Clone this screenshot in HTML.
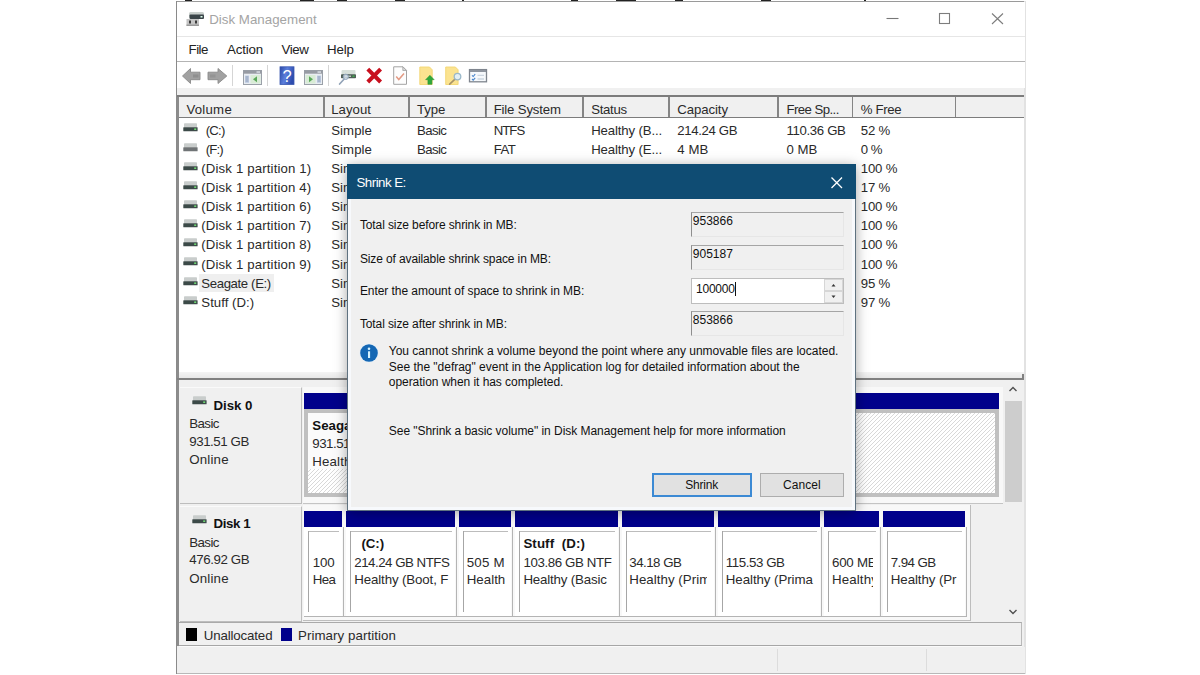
<!DOCTYPE html>
<html><head><meta charset="utf-8"><title>Disk Management</title>
<style>
html,body{margin:0;padding:0;background:#fff;}
body{width:1200px;height:675px;position:relative;overflow:hidden;font-family:"Liberation Sans",sans-serif;font-size:13.6px;color:#202020;}
.a{position:absolute;white-space:pre;}
.b{position:absolute;}
</style></head><body>
<div class="b" style="left:185px;top:0px;width:7px;height:1px;background:#222;"></div>
<div class="b" style="left:300px;top:0px;width:14px;height:1px;background:#222;"></div>
<div class="b" style="left:337px;top:0px;width:10px;height:1px;background:#222;"></div>
<div class="b" style="left:395px;top:0px;width:10px;height:1px;background:#222;"></div>
<div class="b" style="left:462px;top:0px;width:2px;height:1px;background:#222;"></div>
<div class="b" style="left:571px;top:0px;width:7px;height:1px;background:#222;"></div>
<div class="b" style="left:616px;top:0px;width:20px;height:1px;background:#222;"></div>
<div class="b" style="left:675px;top:0px;width:8px;height:1px;background:#222;"></div>
<div class="b" style="left:761px;top:0px;width:10px;height:1px;background:#222;"></div>
<div class="b" style="left:864px;top:0px;width:2px;height:1px;background:#222;"></div>
<div class="b" style="left:176px;top:1px;width:850px;height:673px;background:#f0f0f0;"></div>
<div class="b" style="left:176px;top:1px;width:850px;height:1px;background:#9a9a9a;"></div>
<div class="b" style="left:176px;top:1px;width:1px;height:673px;background:#8a8a8a;"></div>
<div class="b" style="left:1024px;top:1px;width:1.5px;height:673px;background:#e2e2e2;"></div>
<div class="b" style="left:177px;top:2px;width:848px;height:34px;background:#fff;"></div>
<div class="a" style="left:209.2px;top:10.9px;font-size:13.3px;line-height:17px;color:#a4a4a4;letter-spacing:0.022px;">Disk Management</div>
<svg class="b" style="left:185px;top:10px" width="22" height="18" viewBox="0 0 22 18"><rect x="4" y="2" width="15" height="6" rx="1.5" fill="#c9cfcc"/><rect x="4.5" y="4.5" width="14.5" height="4.5" rx="1" fill="#3a4448"/><rect x="15.5" y="6" width="2" height="1.5" fill="#dfe"/><rect x="1.5" y="9" width="12.5" height="7" fill="#c4c4c4"/><rect x="1.5" y="14.500" width="12.5" height="1.5" fill="#9a9a9a"/><rect x="4" y="10.500" width="2" height="3" fill="#3a3a3a"/><rect x="10" y="10.500" width="2" height="3" fill="#3a3a3a"/></svg>
<svg class="b" style="left:880px;top:8px" width="130" height="22" viewBox="0 0 130 22"><path d="M6.5 10.500h12" stroke="#777" stroke-width="1.1" fill="none"/><rect x="59.500" y="5.500" width="10" height="10" stroke="#7d7d7d" stroke-width="1.1" fill="none"/><path d="M112 5.500l11 10.500M123 5.500l-11 10.500" stroke="#7d7d7d" stroke-width="1.1" fill="none"/></svg>
<div class="b" style="left:177px;top:36px;width:848px;height:1px;background:#e6e6e6;"></div>
<div class="b" style="left:177px;top:37px;width:848px;height:24px;background:#fff;"></div>
<div class="b" style="left:177px;top:61px;width:848px;height:1px;background:#b4b4b4;"></div>
<div class="a" style="left:188.5px;top:41.1px;font-size:13.3px;line-height:17px;color:#222;letter-spacing:-0.484px;">File</div>
<div class="a" style="left:227px;top:41.1px;font-size:13.3px;line-height:17px;color:#222;letter-spacing:-0.161px;">Action</div>
<div class="a" style="left:281.5px;top:41.1px;font-size:13.3px;line-height:17px;color:#222;letter-spacing:-0.398px;">View</div>
<div class="a" style="left:327px;top:41.1px;font-size:13.3px;line-height:17px;color:#222;letter-spacing:-0.14px;">Help</div>
<div class="b" style="left:177px;top:62px;width:848px;height:25.5px;background:#fff;"></div>
<svg class="b" style="left:177px;top:62px" width="320" height="26" viewBox="177 62 320 26">
<path d="M182.500 76L190.500 68.500v3.700h9.500v7.500h-9.500v3.800z" fill="#a1a1a1" stroke="#8a8a8a" stroke-width="0.9" stroke-linejoin="round"/>
<rect x="193" y="74.500" width="5.500" height="3" fill="#878787" opacity="0.7"/>
<path d="M226.800 76L218 68.500v3.700h-10v7.500h10v3.800z" fill="#a1a1a1" stroke="#8a8a8a" stroke-width="0.9" stroke-linejoin="round"/><rect x="210" y="74.500" width="5.500" height="3" fill="#878787" opacity="0.5"/>
<path d="M232.5 65v21" stroke="#d5d5d5" stroke-width="1"/>
<path d="M267.5 65v21" stroke="#d5d5d5" stroke-width="1"/>
<path d="M328.5 65v21" stroke="#d5d5d5" stroke-width="1"/>
<rect x="243.5" y="70.5" width="18" height="14" fill="#e9edf2" stroke="#9aa0a8" stroke-width="1"/>
<rect x="243.5" y="70.500" width="18" height="3.200" fill="#979ba3"/>
<rect x="256.5" y="71.3" width="3.5" height="1.5" fill="#d8dde3"/>
<rect x="245.0" y="75.5" width="4" height="7.5" fill="#c6d3e6"/>
<rect x="250.5" y="75" width="10" height="8.5" fill="#d9ecd6"/>
<path d="M257.0 76.2v6l-4-3z" fill="#5aa85a"/>
<path d="M245.5 77h3M245.5 79h3M245.5 81h3" stroke="#7c8aa6" stroke-width="0.8"/>
<defs><linearGradient id="hg" x1="0" y1="0" x2="1" y2="0.35"><stop offset="0" stop-color="#2b49a6"/><stop offset="0.5" stop-color="#5b7edb"/><stop offset="1" stop-color="#2d4cae"/></linearGradient></defs>
<rect x="280" y="66.800" width="14" height="17.700" fill="url(#hg)" stroke="#3a57b0" stroke-width="0.8"/>
<text x="287" y="81.600" font-family="Liberation Sans, sans-serif" font-size="16.500" fill="#ffffff" text-anchor="middle">?</text>
<rect x="304.5" y="70.5" width="18" height="14" fill="#e9edf2" stroke="#9aa0a8" stroke-width="1"/>
<rect x="304.5" y="70.500" width="18" height="3.200" fill="#979ba3"/>
<rect x="317.5" y="71.3" width="3.5" height="1.5" fill="#d8dde3"/>
<rect x="317.0" y="75.5" width="4" height="7.5" fill="#c6d3e6"/>
<rect x="305.5" y="75" width="10" height="8.500" fill="#d9ecd6"/>
<path d="M309.0 76.2v6l4-3z" fill="#5aa85a"/>
<path d="M317.5 77h3M317.5 79h3M317.5 81h3" stroke="#7c8aa6" stroke-width="0.8"/>
<rect x="341.500" y="70" width="14" height="5" rx="1" fill="#d6dfd9"/>
<rect x="341" y="74.300" width="15" height="3.900" rx="0.800" fill="#4f5f57"/>
<rect x="345" y="75.600" width="6" height="1.300" fill="#c9d6cf"/><rect x="352.500" y="75.500" width="2" height="1.500" fill="#3fae4a"/>
<path d="M339.600 84l4.600-5" stroke="#93a4b8" stroke-width="1.700" stroke-linecap="round"/>
<circle cx="345.800" cy="76.800" r="2.600" fill="#d4dfea" fill-opacity="0.85" stroke="#8fa3ba" stroke-width="1"/>
<path d="M367.800 69.200l12.800 12.800M380.600 69.200l-12.800 12.800" stroke="#c8101e" stroke-width="4" stroke-linecap="butt"/>
<path d="M393.700 66.800h9.300l3.500 3.500v14h-12.800z" fill="#fdfdfd" stroke="#a3a3a3" stroke-width="1"/>
<path d="M402.800 66.800v3.700h3.700z" fill="#d9d9d9" stroke="#a3a3a3" stroke-width="0.800"/>
<path d="M396.200 76.500l2.600 3 5.200-6" fill="none" stroke="#e39a84" stroke-width="1.500"/>
<path d="M419.800 67h9.700l2.700 2.800v14.700h-12.400z" fill="#fbe390" stroke="#f3d673" stroke-width="0.900"/>
<path d="M429.900 75.300l4.300 4.400h-2.300v4.600h-4v-4.600h-2.300z" fill="#2fa83b" stroke="#23912f" stroke-width="0.500"/>
<path d="M445.700 67h9.700l2.700 2.800v14.700h-12.400z" fill="#fbe390" stroke="#f3d673" stroke-width="0.900"/>
<path d="M455 79.200l-5.300 4.900" stroke="#a89468" stroke-width="1.700" stroke-linecap="round"/>
<circle cx="457.500" cy="76.600" r="3.300" fill="#e3eff5" stroke="#9ab8c9" stroke-width="1.300"/>
<rect x="469.500" y="69.600" width="17" height="12.200" fill="#f6f9fc" stroke="#7f858e" stroke-width="1.300"/>
<rect x="470" y="70" width="16" height="2" fill="#8e959f"/>
<path d="M472 75.300l1.200 1.200 2-2.400M472 79l1.200 1.200 2-2.400" stroke="#4a86cc" stroke-width="1.100" fill="none"/>
<path d="M477.500 75.300h6.500M477.500 79h6.500" stroke="#ccd6e0" stroke-width="1.300"/>
</svg>
<div class="b" style="left:177px;top:95.3px;width:847px;height:1.6px;background:#7c7c7c;"></div>
<div class="b" style="left:177px;top:96.9px;width:2px;height:282px;background:#8c8c8c;"></div>
<div class="b" style="left:179px;top:96.9px;width:845px;height:19.7px;background:#f0f0f0;"></div>
<div class="b" style="left:179px;top:116.6px;width:845px;height:1.6px;background:#7c7c7c;"></div>
<div class="b" style="left:179px;top:118.2px;width:845px;height:253.5px;background:#fff;"></div>
<div class="b" style="left:179px;top:371.5px;width:845px;height:6.7px;background:linear-gradient(#f4f4f4,#e8e8e8);"></div>
<div class="b" style="left:177px;top:378.2px;width:846.5px;height:1.6px;background:#808080;"></div>
<div class="b" style="left:1022px;top:374px;width:1.5px;height:5px;background:#808080;"></div>
<div class="b" style="left:323px;top:97px;width:1.8px;height:20px;background:#858585;"></div>
<div class="b" style="left:408.3px;top:97px;width:1.8px;height:20px;background:#858585;"></div>
<div class="b" style="left:485px;top:97px;width:1.8px;height:20px;background:#858585;"></div>
<div class="b" style="left:582.3px;top:97px;width:1.8px;height:20px;background:#858585;"></div>
<div class="b" style="left:668px;top:97px;width:1.8px;height:20px;background:#858585;"></div>
<div class="b" style="left:777px;top:97px;width:1.8px;height:20px;background:#858585;"></div>
<div class="b" style="left:851.7px;top:97px;width:1.8px;height:20px;background:#858585;"></div>
<div class="b" style="left:954.5px;top:97px;width:1.8px;height:20px;background:#858585;"></div>
<div class="a" style="left:186.4px;top:101.1px;font-size:13.2px;line-height:17px;color:#2a2a2a;letter-spacing:0.267px;">Volume</div>
<div class="a" style="left:331.2px;top:101.1px;font-size:13.2px;line-height:17px;color:#2a2a2a;letter-spacing:0.032px;">Layout</div>
<div class="a" style="left:417px;top:101.1px;font-size:13.2px;line-height:17px;color:#2a2a2a;letter-spacing:-0.073px;">Type</div>
<div class="a" style="left:493.7px;top:101.1px;font-size:13.2px;line-height:17px;color:#2a2a2a;letter-spacing:-0.163px;">File System</div>
<div class="a" style="left:591.2px;top:101.1px;font-size:13.2px;line-height:17px;color:#2a2a2a;letter-spacing:-0.298px;">Status</div>
<div class="a" style="left:677.2px;top:101.1px;font-size:13.2px;line-height:17px;color:#2a2a2a;letter-spacing:-0.064px;">Capacity</div>
<div class="a" style="left:786.4px;top:101.1px;font-size:13.2px;line-height:17px;color:#2a2a2a;letter-spacing:-0.551px;">Free Sp...</div>
<div class="a" style="left:860.8px;top:101.1px;font-size:13.2px;line-height:17px;color:#2a2a2a;letter-spacing:-0.353px;">% Free</div>
<svg class="b" style="left:183px;top:123.3px" width="16" height="10" viewBox="0 0 16 10"><rect x="1" y="0.300" width="13" height="4.200" rx="0.800" fill="#c9cdcc"/><rect x="0.300" y="4.200" width="14.300" height="4" rx="0.500" fill="#3c4a48"/><rect x="11.200" y="5.400" width="2" height="1.600" fill="#6fd872"/></svg>
<div class="a" style="left:205.8px;top:121.5px;font-size:13.2px;line-height:17px;color:#2a2a2a;letter-spacing:-0.821px;">(C:)</div>
<div class="a" style="left:331.2px;top:121.5px;font-size:13.2px;line-height:17px;color:#2a2a2a;letter-spacing:0.081px;">Simple</div>
<div class="a" style="left:417px;top:121.5px;font-size:13.2px;line-height:17px;color:#2a2a2a;letter-spacing:-0.59px;">Basic</div>
<div class="a" style="left:493.7px;top:121.5px;font-size:13.2px;line-height:17px;color:#2a2a2a;letter-spacing:-0.959px;">NTFS</div>
<div class="a" style="left:591.2px;top:121.5px;font-size:13.2px;line-height:17px;color:#2a2a2a;letter-spacing:-0.136px;">Healthy (B...</div>
<div class="a" style="left:677.2px;top:121.5px;font-size:13.2px;line-height:17px;color:#2a2a2a;letter-spacing:-0.34px;">214.24 GB</div>
<div class="a" style="left:786.4px;top:121.5px;font-size:13.2px;line-height:17px;color:#2a2a2a;letter-spacing:-0.32px;">110.36 GB</div>
<div class="a" style="left:860.8px;top:121.5px;font-size:13.2px;line-height:17px;color:#2a2a2a;letter-spacing:-0.216px;">52 %</div>
<svg class="b" style="left:183px;top:142.5px" width="16" height="10" viewBox="0 0 16 10"><rect x="1" y="0.300" width="13" height="4.200" rx="0.800" fill="#c9cdcc"/><rect x="0.300" y="4.200" width="14.300" height="4" rx="0.500" fill="#707476"/></svg>
<div class="a" style="left:205.8px;top:140.65px;font-size:13.2px;line-height:17px;color:#2a2a2a;letter-spacing:-0.879px;">(F:)</div>
<div class="a" style="left:331.2px;top:140.65px;font-size:13.2px;line-height:17px;color:#2a2a2a;letter-spacing:0.081px;">Simple</div>
<div class="a" style="left:417px;top:140.65px;font-size:13.2px;line-height:17px;color:#2a2a2a;letter-spacing:-0.59px;">Basic</div>
<div class="a" style="left:493.7px;top:140.65px;font-size:13.2px;line-height:17px;color:#2a2a2a;letter-spacing:-0.601px;">FAT</div>
<div class="a" style="left:591.2px;top:140.65px;font-size:13.2px;line-height:17px;color:#2a2a2a;letter-spacing:-0.136px;">Healthy (E...</div>
<div class="a" style="left:677.2px;top:140.65px;font-size:13.2px;line-height:17px;color:#2a2a2a;letter-spacing:0.105px;">4 MB</div>
<div class="a" style="left:786.4px;top:140.65px;font-size:13.2px;line-height:17px;color:#2a2a2a;letter-spacing:0.005px;">0 MB</div>
<div class="a" style="left:860.8px;top:140.65px;font-size:13.2px;line-height:17px;color:#2a2a2a;letter-spacing:-0.511px;">0 %</div>
<svg class="b" style="left:183px;top:161.6px" width="16" height="10" viewBox="0 0 16 10"><rect x="1" y="0.300" width="13" height="4.200" rx="0.800" fill="#c9cdcc"/><rect x="0.300" y="4.200" width="14.300" height="4" rx="0.500" fill="#3c4a48"/><rect x="11.200" y="5.400" width="2" height="1.600" fill="#6fd872"/></svg>
<div class="a" style="left:201.3px;top:159.8px;font-size:13.2px;line-height:17px;color:#2a2a2a;letter-spacing:0.154px;">(Disk 1 partition 1)</div>
<div class="a" style="left:331.2px;top:159.8px;font-size:13.2px;line-height:17px;color:#2a2a2a;letter-spacing:0.081px;">Simple</div>
<div class="a" style="left:417px;top:159.8px;font-size:13.2px;line-height:17px;color:#2a2a2a;letter-spacing:-0.59px;">Basic</div>
<div class="a" style="left:591.2px;top:159.8px;font-size:13.2px;line-height:17px;color:#2a2a2a;letter-spacing:-0.136px;">Healthy (E...</div>
<div class="a" style="left:677.2px;top:159.8px;font-size:13.2px;line-height:17px;color:#2a2a2a;letter-spacing:-0.159px;">100 MB</div>
<div class="a" style="left:786.4px;top:159.8px;font-size:13.2px;line-height:17px;color:#2a2a2a;letter-spacing:-0.159px;">100 MB</div>
<div class="a" style="left:860.8px;top:159.8px;font-size:13.2px;line-height:17px;color:#2a2a2a;letter-spacing:-0.201px;">100 %</div>
<svg class="b" style="left:183px;top:180.8px" width="16" height="10" viewBox="0 0 16 10"><rect x="1" y="0.300" width="13" height="4.200" rx="0.800" fill="#c9cdcc"/><rect x="0.300" y="4.200" width="14.300" height="4" rx="0.500" fill="#3c4a48"/><rect x="11.200" y="5.400" width="2" height="1.600" fill="#6fd872"/></svg>
<div class="a" style="left:201.3px;top:178.95px;font-size:13.2px;line-height:17px;color:#2a2a2a;letter-spacing:0.154px;">(Disk 1 partition 4)</div>
<div class="a" style="left:331.2px;top:178.95px;font-size:13.2px;line-height:17px;color:#2a2a2a;letter-spacing:0.081px;">Simple</div>
<div class="a" style="left:417px;top:178.95px;font-size:13.2px;line-height:17px;color:#2a2a2a;letter-spacing:-0.59px;">Basic</div>
<div class="a" style="left:591.2px;top:178.95px;font-size:13.2px;line-height:17px;color:#2a2a2a;letter-spacing:-0.192px;">Healthy (R...</div>
<div class="a" style="left:677.2px;top:178.95px;font-size:13.2px;line-height:17px;color:#2a2a2a;letter-spacing:-0.159px;">505 MB</div>
<div class="a" style="left:786.4px;top:178.95px;font-size:13.2px;line-height:17px;color:#2a2a2a;letter-spacing:-0.125px;">86 MB</div>
<div class="a" style="left:860.8px;top:178.95px;font-size:13.2px;line-height:17px;color:#2a2a2a;letter-spacing:-0.216px;">17 %</div>
<svg class="b" style="left:183px;top:199.9px" width="16" height="10" viewBox="0 0 16 10"><rect x="1" y="0.300" width="13" height="4.200" rx="0.800" fill="#c9cdcc"/><rect x="0.300" y="4.200" width="14.300" height="4" rx="0.500" fill="#3c4a48"/><rect x="11.200" y="5.400" width="2" height="1.600" fill="#6fd872"/></svg>
<div class="a" style="left:201.3px;top:198.1px;font-size:13.2px;line-height:17px;color:#2a2a2a;letter-spacing:0.154px;">(Disk 1 partition 6)</div>
<div class="a" style="left:331.2px;top:198.1px;font-size:13.2px;line-height:17px;color:#2a2a2a;letter-spacing:0.081px;">Simple</div>
<div class="a" style="left:417px;top:198.1px;font-size:13.2px;line-height:17px;color:#2a2a2a;letter-spacing:-0.59px;">Basic</div>
<div class="a" style="left:591.2px;top:198.1px;font-size:13.2px;line-height:17px;color:#2a2a2a;letter-spacing:-0.005px;">Healthy (P...</div>
<div class="a" style="left:677.2px;top:198.1px;font-size:13.2px;line-height:17px;color:#2a2a2a;letter-spacing:-0.402px;">34.18 GB</div>
<div class="a" style="left:786.4px;top:198.1px;font-size:13.2px;line-height:17px;color:#2a2a2a;letter-spacing:-0.402px;">34.18 GB</div>
<div class="a" style="left:860.8px;top:198.1px;font-size:13.2px;line-height:17px;color:#2a2a2a;letter-spacing:-0.201px;">100 %</div>
<svg class="b" style="left:183px;top:219.1px" width="16" height="10" viewBox="0 0 16 10"><rect x="1" y="0.300" width="13" height="4.200" rx="0.800" fill="#c9cdcc"/><rect x="0.300" y="4.200" width="14.300" height="4" rx="0.500" fill="#3c4a48"/><rect x="11.200" y="5.400" width="2" height="1.600" fill="#6fd872"/></svg>
<div class="a" style="left:201.3px;top:217.25px;font-size:13.2px;line-height:17px;color:#2a2a2a;letter-spacing:0.154px;">(Disk 1 partition 7)</div>
<div class="a" style="left:331.2px;top:217.25px;font-size:13.2px;line-height:17px;color:#2a2a2a;letter-spacing:0.081px;">Simple</div>
<div class="a" style="left:417px;top:217.25px;font-size:13.2px;line-height:17px;color:#2a2a2a;letter-spacing:-0.59px;">Basic</div>
<div class="a" style="left:591.2px;top:217.25px;font-size:13.2px;line-height:17px;color:#2a2a2a;letter-spacing:-0.005px;">Healthy (P...</div>
<div class="a" style="left:677.2px;top:217.25px;font-size:13.2px;line-height:17px;color:#2a2a2a;letter-spacing:-0.275px;">115.53 GB</div>
<div class="a" style="left:786.4px;top:217.25px;font-size:13.2px;line-height:17px;color:#2a2a2a;letter-spacing:-0.275px;">115.53 GB</div>
<div class="a" style="left:860.8px;top:217.25px;font-size:13.2px;line-height:17px;color:#2a2a2a;letter-spacing:-0.201px;">100 %</div>
<svg class="b" style="left:183px;top:238.2px" width="16" height="10" viewBox="0 0 16 10"><rect x="1" y="0.300" width="13" height="4.200" rx="0.800" fill="#c9cdcc"/><rect x="0.300" y="4.200" width="14.300" height="4" rx="0.500" fill="#3c4a48"/><rect x="11.200" y="5.400" width="2" height="1.600" fill="#6fd872"/></svg>
<div class="a" style="left:201.3px;top:236.4px;font-size:13.2px;line-height:17px;color:#2a2a2a;letter-spacing:0.154px;">(Disk 1 partition 8)</div>
<div class="a" style="left:331.2px;top:236.4px;font-size:13.2px;line-height:17px;color:#2a2a2a;letter-spacing:0.081px;">Simple</div>
<div class="a" style="left:417px;top:236.4px;font-size:13.2px;line-height:17px;color:#2a2a2a;letter-spacing:-0.59px;">Basic</div>
<div class="a" style="left:591.2px;top:236.4px;font-size:13.2px;line-height:17px;color:#2a2a2a;letter-spacing:-0.136px;">Healthy (E...</div>
<div class="a" style="left:677.2px;top:236.4px;font-size:13.2px;line-height:17px;color:#2a2a2a;letter-spacing:-0.159px;">600 MB</div>
<div class="a" style="left:786.4px;top:236.4px;font-size:13.2px;line-height:17px;color:#2a2a2a;letter-spacing:-0.159px;">600 MB</div>
<div class="a" style="left:860.8px;top:236.4px;font-size:13.2px;line-height:17px;color:#2a2a2a;letter-spacing:-0.201px;">100 %</div>
<svg class="b" style="left:183px;top:257.3px" width="16" height="10" viewBox="0 0 16 10"><rect x="1" y="0.300" width="13" height="4.200" rx="0.800" fill="#c9cdcc"/><rect x="0.300" y="4.200" width="14.300" height="4" rx="0.500" fill="#3c4a48"/><rect x="11.200" y="5.400" width="2" height="1.600" fill="#6fd872"/></svg>
<div class="a" style="left:201.3px;top:255.55px;font-size:13.2px;line-height:17px;color:#2a2a2a;letter-spacing:0.154px;">(Disk 1 partition 9)</div>
<div class="a" style="left:331.2px;top:255.55px;font-size:13.2px;line-height:17px;color:#2a2a2a;letter-spacing:0.081px;">Simple</div>
<div class="a" style="left:417px;top:255.55px;font-size:13.2px;line-height:17px;color:#2a2a2a;letter-spacing:-0.59px;">Basic</div>
<div class="a" style="left:591.2px;top:255.55px;font-size:13.2px;line-height:17px;color:#2a2a2a;letter-spacing:-0.005px;">Healthy (P...</div>
<div class="a" style="left:677.2px;top:255.55px;font-size:13.2px;line-height:17px;color:#2a2a2a;letter-spacing:-0.484px;">7.94 GB</div>
<div class="a" style="left:786.4px;top:255.55px;font-size:13.2px;line-height:17px;color:#2a2a2a;letter-spacing:-0.484px;">7.94 GB</div>
<div class="a" style="left:860.8px;top:255.55px;font-size:13.2px;line-height:17px;color:#2a2a2a;letter-spacing:-0.201px;">100 %</div>
<div class="b" style="left:199px;top:273.6px;width:74.5px;height:18.3px;background:#efefef;"></div>
<svg class="b" style="left:183px;top:276.5px" width="16" height="10" viewBox="0 0 16 10"><rect x="1" y="0.300" width="13" height="4.200" rx="0.800" fill="#c9cdcc"/><rect x="0.300" y="4.200" width="14.300" height="4" rx="0.500" fill="#3c4a48"/><rect x="11.200" y="5.400" width="2" height="1.600" fill="#6fd872"/></svg>
<div class="a" style="left:201.3px;top:274.7px;font-size:13.2px;line-height:17px;color:#2a2a2a;letter-spacing:-0.371px;">Seagate (E:)</div>
<div class="a" style="left:331.2px;top:274.7px;font-size:13.2px;line-height:17px;color:#2a2a2a;letter-spacing:0.081px;">Simple</div>
<div class="a" style="left:417px;top:274.7px;font-size:13.2px;line-height:17px;color:#2a2a2a;letter-spacing:-0.59px;">Basic</div>
<div class="a" style="left:493.7px;top:274.7px;font-size:13.2px;line-height:17px;color:#2a2a2a;letter-spacing:-0.959px;">NTFS</div>
<div class="a" style="left:591.2px;top:274.7px;font-size:13.2px;line-height:17px;color:#2a2a2a;letter-spacing:-0.136px;">Healthy (B...</div>
<div class="a" style="left:677.2px;top:274.7px;font-size:13.2px;line-height:17px;color:#2a2a2a;letter-spacing:-0.385px;">931.51 GB</div>
<div class="a" style="left:786.4px;top:274.7px;font-size:13.2px;line-height:17px;color:#2a2a2a;letter-spacing:-0.385px;">885.66 GB</div>
<div class="a" style="left:860.8px;top:274.7px;font-size:13.2px;line-height:17px;color:#2a2a2a;letter-spacing:-0.216px;">95 %</div>
<svg class="b" style="left:183px;top:295.7px" width="16" height="10" viewBox="0 0 16 10"><rect x="1" y="0.300" width="13" height="4.200" rx="0.800" fill="#c9cdcc"/><rect x="0.300" y="4.200" width="14.300" height="4" rx="0.500" fill="#3c4a48"/><rect x="11.200" y="5.400" width="2" height="1.600" fill="#6fd872"/></svg>
<div class="a" style="left:201.3px;top:293.85px;font-size:13.2px;line-height:17px;color:#2a2a2a;letter-spacing:0.037px;">Stuff (D:)</div>
<div class="a" style="left:331.2px;top:293.85px;font-size:13.2px;line-height:17px;color:#2a2a2a;letter-spacing:0.081px;">Simple</div>
<div class="a" style="left:417px;top:293.85px;font-size:13.2px;line-height:17px;color:#2a2a2a;letter-spacing:-0.59px;">Basic</div>
<div class="a" style="left:493.7px;top:293.85px;font-size:13.2px;line-height:17px;color:#2a2a2a;letter-spacing:-0.959px;">NTFS</div>
<div class="a" style="left:591.2px;top:293.85px;font-size:13.2px;line-height:17px;color:#2a2a2a;letter-spacing:-0.136px;">Healthy (B...</div>
<div class="a" style="left:677.2px;top:293.85px;font-size:13.2px;line-height:17px;color:#2a2a2a;letter-spacing:-0.385px;">103.86 GB</div>
<div class="a" style="left:786.4px;top:293.85px;font-size:13.2px;line-height:17px;color:#2a2a2a;letter-spacing:-0.385px;">100.97 GB</div>
<div class="a" style="left:860.8px;top:293.85px;font-size:13.2px;line-height:17px;color:#2a2a2a;letter-spacing:-0.216px;">97 %</div>
<div class="b" style="left:1004px;top:383px;width:18px;height:238px;background:#f0f0f0;"></div>
<div class="b" style="left:1005px;top:401px;width:17px;height:101px;background:#cdcdcd;"></div>
<svg class="b" style="left:1007px;top:385px" width="12" height="8" viewBox="0 0 12 8"><path d="M2.500 6L6 2.500L9.500 6" stroke="#505050" stroke-width="1.4" fill="none"/></svg>
<svg class="b" style="left:1007px;top:608px" width="12" height="8" viewBox="0 0 12 8"><path d="M2.500 2L6 5.500L9.500 2" stroke="#505050" stroke-width="1.4" fill="none"/></svg>
<div class="b" style="left:180px;top:387px;width:122px;height:117px;background:#f0f0f0;border-top:1px solid #fafafa;border-right:1px solid #bdbdbd;border-bottom:1px solid #bdbdbd;box-sizing:border-box;"></div>
<svg class="b" style="left:191.7px;top:396.2px" width="16" height="10" viewBox="0 0 16 10"><rect x="1" y="0.300" width="13" height="4.200" rx="0.800" fill="#c9cdcc"/><rect x="0.300" y="4.200" width="14.300" height="4" rx="0.500" fill="#3c4a48"/><rect x="11.200" y="5.400" width="2" height="1.600" fill="#6fd872"/></svg>
<div class="a" style="left:213.5px;top:396.5px;font-size:13.3px;line-height:17px;color:#111;font-weight:bold;letter-spacing:-0.065px;">Disk 0</div>
<div class="a" style="left:189.3px;top:414.7px;font-size:13.3px;line-height:17px;color:#2a2a2a;letter-spacing:-0.603px;">Basic</div>
<div class="a" style="left:189.3px;top:432.7px;font-size:13.3px;line-height:17px;color:#2a2a2a;letter-spacing:-0.453px;">931.51 GB</div>
<div class="a" style="left:189.3px;top:450.8px;font-size:13.3px;line-height:17px;color:#2a2a2a;letter-spacing:0.16px;">Online</div>
<div class="b" style="left:303px;top:387px;width:700px;height:117px;background:#f8f8f8;border-bottom:1px solid #c4c4c4;box-sizing:border-box;"></div>
<div class="b" style="left:304px;top:393px;width:695px;height:16px;background:#00008b;"></div>
<div class="b" style="left:304px;top:409px;width:695px;height:88px;background:#c0c0c0;"></div>
<div class="b" style="left:308px;top:413px;width:687px;height:80px;background:repeating-linear-gradient(135deg,#ffffff 0px,#ffffff 1.730px,#d8d8d8 1.930px,#d8d8d8 2.630px,#ffffff 2.828px);"></div>
<div class="b" style="left:308px;top:413px;width:60px;height:56px;background:#fbfbfb;"></div>
<div class="a" style="left:312.3px;top:417.0px;font-size:13.3px;line-height:17px;color:#111;font-weight:bold;letter-spacing:0.0px;">Seagate</div>
<div class="a" style="left:312.3px;top:434.8px;font-size:13.3px;line-height:17px;color:#2a2a2a;letter-spacing:-0.5px;">931.51 GB NTFS</div>
<div class="a" style="left:312.3px;top:452.7px;font-size:13.3px;line-height:17px;color:#2a2a2a;letter-spacing:0.129px;">Healthy</div>
<div class="b" style="left:180px;top:505.5px;width:122px;height:116px;background:#f0f0f0;border-top:1px solid #fafafa;border-right:1px solid #bdbdbd;border-bottom:1px solid #bdbdbd;box-sizing:border-box;"></div>
<svg class="b" style="left:191.7px;top:514.9px" width="16" height="10" viewBox="0 0 16 10"><rect x="1" y="0.300" width="13" height="4.200" rx="0.800" fill="#c9cdcc"/><rect x="0.300" y="4.200" width="14.300" height="4" rx="0.500" fill="#3c4a48"/><rect x="11.200" y="5.400" width="2" height="1.600" fill="#6fd872"/></svg>
<div class="a" style="left:213.5px;top:515.2px;font-size:13.3px;line-height:17px;color:#111;font-weight:bold;letter-spacing:-0.398px;">Disk 1</div>
<div class="a" style="left:189.3px;top:533.5px;font-size:13.3px;line-height:17px;color:#2a2a2a;letter-spacing:-0.603px;">Basic</div>
<div class="a" style="left:189.3px;top:551.3px;font-size:13.3px;line-height:17px;color:#2a2a2a;letter-spacing:-0.42px;">476.92 GB</div>
<div class="a" style="left:189.3px;top:569.5px;font-size:13.3px;line-height:17px;color:#2a2a2a;letter-spacing:0.16px;">Online</div>
<div class="b" style="left:303px;top:505px;width:668px;height:116px;background:#f8f8f8;border-right:1px solid #bdbdbd;border-bottom:1px solid #bdbdbd;box-sizing:border-box;"></div>
<div class="b" style="left:304px;top:511px;width:38px;height:16px;background:#00008b;"></div>
<div class="b" style="left:304px;top:527px;width:38px;height:89px;background:#fff;"></div>
<div class="b" style="left:342.5px;top:527px;width:1.5px;height:89px;background:#b4b4b4;"></div>
<div class="b" style="left:308px;top:530.5px;width:31px;height:1.5px;background:#bcbcbc;"></div>
<div class="b" style="left:308px;top:530.5px;width:1.3px;height:81.5px;background:#a6a6a6;"></div>
<div class="a" style="left:312.8px;top:553.7px;font-size:13.3px;line-height:17px;color:#2a2a2a;letter-spacing:-0.229px;">100</div>
<div class="a" style="left:312.8px;top:571.3px;font-size:13.3px;line-height:17px;color:#2a2a2a;letter-spacing:-0.635px;">Hea</div>
<div class="b" style="left:346px;top:511px;width:109px;height:16px;background:#00008b;"></div>
<div class="b" style="left:346px;top:527px;width:109px;height:89px;background:#fff;"></div>
<div class="b" style="left:455.5px;top:527px;width:1.5px;height:89px;background:#b4b4b4;"></div>
<div class="b" style="left:350px;top:530.5px;width:102px;height:1.5px;background:#bcbcbc;"></div>
<div class="b" style="left:350px;top:530.5px;width:1.3px;height:81.5px;background:#a6a6a6;"></div>
<div class="a" style="left:354.3px;top:535.1px;font-size:13.3px;line-height:17px;color:#151515;font-weight:bold;letter-spacing:-0.097px;">&nbsp;&nbsp;(C:)</div>
<div class="a" style="left:354.3px;top:553.7px;font-size:13.3px;line-height:17px;color:#2a2a2a;letter-spacing:-0.5px;">214.24 GB NTFS</div>
<div class="a" style="left:354.3px;top:571.3px;font-size:13.3px;line-height:17px;color:#2a2a2a;letter-spacing:-0.13px;">Healthy (Boot, F</div>
<div class="b" style="left:459px;top:511px;width:52px;height:16px;background:#00008b;"></div>
<div class="b" style="left:459px;top:527px;width:52px;height:89px;background:#fff;"></div>
<div class="b" style="left:511.5px;top:527px;width:1.5px;height:89px;background:#b4b4b4;"></div>
<div class="b" style="left:463px;top:530.5px;width:45px;height:1.5px;background:#bcbcbc;"></div>
<div class="b" style="left:463px;top:530.5px;width:1.3px;height:81.5px;background:#a6a6a6;"></div>
<div class="a" style="left:466.7px;top:553.7px;font-size:13.3px;line-height:17px;color:#2a2a2a;letter-spacing:0.206px;">505 M</div>
<div class="a" style="left:466.7px;top:571.3px;font-size:13.3px;line-height:17px;color:#2a2a2a;letter-spacing:0.027px;">Health</div>
<div class="b" style="left:515px;top:511px;width:103px;height:16px;background:#00008b;"></div>
<div class="b" style="left:515px;top:527px;width:103px;height:89px;background:#fff;"></div>
<div class="b" style="left:618.5px;top:527px;width:1.5px;height:89px;background:#b4b4b4;"></div>
<div class="b" style="left:519px;top:530.5px;width:96px;height:1.5px;background:#bcbcbc;"></div>
<div class="b" style="left:519px;top:530.5px;width:1.3px;height:81.5px;background:#a6a6a6;"></div>
<div class="a" style="left:523.4px;top:535.1px;font-size:13.3px;line-height:17px;color:#151515;font-weight:bold;letter-spacing:0.103px;">Stuff&nbsp;&nbsp;(D:)</div>
<div class="a" style="left:523.4px;top:553.7px;font-size:13.3px;line-height:17px;color:#2a2a2a;letter-spacing:-0.394px;">103.86 GB NTF</div>
<div class="a" style="left:523.4px;top:571.3px;font-size:13.3px;line-height:17px;color:#2a2a2a;letter-spacing:-0.174px;">Healthy (Basic</div>
<div class="b" style="left:622px;top:511px;width:92px;height:16px;background:#00008b;"></div>
<div class="b" style="left:622px;top:527px;width:92px;height:89px;background:#fff;"></div>
<div class="b" style="left:714.5px;top:527px;width:1.5px;height:89px;background:#b4b4b4;"></div>
<div class="b" style="left:626px;top:530.5px;width:85px;height:1.5px;background:#bcbcbc;"></div>
<div class="b" style="left:626px;top:530.5px;width:1.3px;height:81.5px;background:#a6a6a6;"></div>
<div class="a" style="left:629.3px;top:553.7px;font-size:13.3px;line-height:17px;color:#2a2a2a;letter-spacing:-0.523px;">34.18 GB</div>
<div class="a" style="left:629.3px;top:571.3px;font-size:13.3px;line-height:17px;color:#2a2a2a;letter-spacing:0.035px;width:77.9px;overflow:hidden;">Healthy (Prim</div>
<div class="b" style="left:718px;top:511px;width:102px;height:16px;background:#00008b;"></div>
<div class="b" style="left:718px;top:527px;width:102px;height:89px;background:#fff;"></div>
<div class="b" style="left:820.5px;top:527px;width:1.5px;height:89px;background:#b4b4b4;"></div>
<div class="b" style="left:722px;top:530.5px;width:95px;height:1.5px;background:#bcbcbc;"></div>
<div class="b" style="left:722px;top:530.5px;width:1.3px;height:81.5px;background:#a6a6a6;"></div>
<div class="a" style="left:725.8px;top:553.7px;font-size:13.3px;line-height:17px;color:#2a2a2a;letter-spacing:-0.433px;">115.53 GB</div>
<div class="a" style="left:725.8px;top:571.3px;font-size:13.3px;line-height:17px;color:#2a2a2a;letter-spacing:-0.067px;">Healthy (Prima</div>
<div class="b" style="left:824px;top:511px;width:55px;height:16px;background:#00008b;"></div>
<div class="b" style="left:824px;top:527px;width:55px;height:89px;background:#fff;"></div>
<div class="b" style="left:879.5px;top:527px;width:1.5px;height:89px;background:#b4b4b4;"></div>
<div class="b" style="left:828px;top:530.5px;width:48px;height:1.5px;background:#bcbcbc;"></div>
<div class="b" style="left:828px;top:530.5px;width:1.3px;height:81.5px;background:#a6a6a6;"></div>
<div class="a" style="left:832px;top:553.7px;font-size:13.3px;line-height:17px;color:#2a2a2a;letter-spacing:-0.221px;width:41px;overflow:hidden;">600 MB</div>
<div class="a" style="left:832px;top:571.3px;font-size:13.3px;line-height:17px;color:#2a2a2a;letter-spacing:0.129px;width:41.2px;overflow:hidden;">Healthy</div>
<div class="b" style="left:883px;top:511px;width:82px;height:16px;background:#00008b;"></div>
<div class="b" style="left:883px;top:527px;width:82px;height:89px;background:#fff;"></div>
<div class="b" style="left:965.5px;top:527px;width:1.5px;height:89px;background:#b4b4b4;"></div>
<div class="b" style="left:887px;top:530.5px;width:75px;height:1.5px;background:#bcbcbc;"></div>
<div class="b" style="left:887px;top:530.5px;width:1.3px;height:81.5px;background:#a6a6a6;"></div>
<div class="a" style="left:890.8px;top:553.7px;font-size:13.3px;line-height:17px;color:#2a2a2a;letter-spacing:-0.585px;">7.94 GB</div>
<div class="a" style="left:890.8px;top:571.3px;font-size:13.3px;line-height:17px;color:#2a2a2a;letter-spacing:-0.083px;">Healthy (Pr</div>
<div class="b" style="left:304px;top:616px;width:663px;height:1px;background:#b4b4b4;"></div>
<div class="b" style="left:177px;top:622px;width:845px;height:24px;background:#f0f0f0;border-top:1px solid #a9a9a9;border-bottom:1px solid #a6a6a6;border-right:1px solid #b9b9b9;box-sizing:border-box;"></div>
<div class="b" style="left:179px;top:646px;width:843px;height:1px;background:#fafafa;"></div>
<div class="b" style="left:185.5px;top:627.5px;width:11.5px;height:13.5px;background:#000;"></div>
<div class="a" style="left:203.7px;top:627.0px;font-size:13.3px;line-height:17px;color:#2a2a2a;letter-spacing:-0.139px;">Unallocated</div>
<div class="b" style="left:280.5px;top:627.5px;width:11.5px;height:13.5px;background:#00008b;"></div>
<div class="a" style="left:298px;top:627.0px;font-size:13.3px;line-height:17px;color:#2a2a2a;letter-spacing:0.07px;">Primary partition</div>
<div class="b" style="left:177px;top:380px;width:2px;height:266px;background:#8c8c8c;"></div>
<div class="b" style="left:177px;top:647px;width:848px;height:26.5px;background:#f0f0f0;border-bottom:1px solid #b8b8b8;box-sizing:border-box;"></div>
<div class="b" style="left:777px;top:649px;width:1px;height:22px;background:#dcdcdc;"></div>
<div class="b" style="left:926px;top:649px;width:1px;height:22px;background:#dcdcdc;"></div>
<div class="b" style="left:346.5px;top:164.3px;width:509px;height:346.6px;background:#f0f0f0;box-shadow:0 2px 12px rgba(0,0,0,0.35), inset 0 0 0 3px #f7f9fc;border:1px solid #5f7280;box-sizing:border-box;"></div>
<div class="b" style="left:346.5px;top:164.3px;width:509px;height:34.5px;background:#0f4c73;"></div>
<div class="a" style="left:356.5px;top:173.5px;font-size:13.3px;line-height:17px;color:#fff;letter-spacing:-0.517px;">Shrink E:</div>
<svg class="b" style="left:829px;top:175px" width="16" height="16" viewBox="0 0 16 16"><path d="M2.500 2.500l10.500 10.500M13 2.500L2.500 13" stroke="#fff" stroke-width="1.3" fill="none"/></svg>
<div class="a" style="left:359.9px;top:217.8px;font-size:12px;line-height:14px;color:#111;letter-spacing:-0.106px;">Total size before shrink in MB:</div>
<div class="a" style="left:359.9px;top:252.2px;font-size:12px;line-height:14px;color:#111;letter-spacing:-0.12px;">Size of available shrink space in MB:</div>
<div class="a" style="left:359.9px;top:284.2px;font-size:12px;line-height:14px;color:#111;letter-spacing:-0.059px;">Enter the amount of space to shrink in MB:</div>
<div class="a" style="left:359.9px;top:317.0px;font-size:12px;line-height:14px;color:#111;letter-spacing:-0.102px;">Total size after shrink in MB:</div>
<div class="b" style="left:691px;top:212px;width:153px;height:25px;background:#f0f0f0;border-left:1px solid #8e8e8e;border-top:1px solid #a5a5a5;border-right:1px solid #e6e6e6;border-bottom:1px solid #e6e6e6;box-sizing:border-box;"></div>
<div class="a" style="left:692.8px;top:213.5px;font-size:12px;line-height:14px;color:#111;letter-spacing:-0.008px;">953866</div>
<div class="b" style="left:691px;top:245px;width:153px;height:25px;background:#f0f0f0;border-left:1px solid #8e8e8e;border-top:1px solid #a5a5a5;border-right:1px solid #e6e6e6;border-bottom:1px solid #e6e6e6;box-sizing:border-box;"></div>
<div class="a" style="left:692.8px;top:247.1px;font-size:12px;line-height:14px;color:#111;letter-spacing:-0.008px;">905187</div>
<div class="b" style="left:691px;top:311px;width:153px;height:25px;background:#f0f0f0;border-left:1px solid #8e8e8e;border-top:1px solid #a5a5a5;border-right:1px solid #e6e6e6;border-bottom:1px solid #e6e6e6;box-sizing:border-box;"></div>
<div class="a" style="left:692.8px;top:312.5px;font-size:12px;line-height:14px;color:#111;letter-spacing:-0.008px;">853866</div>
<div class="b" style="left:691px;top:278px;width:153px;height:26px;background:#fff;border:1px solid #bdbdbd;box-sizing:border-box;"></div>
<div class="a" style="left:696px;top:282.3px;font-size:12px;line-height:14px;color:#111;letter-spacing:-0.224px;">100000</div>
<div class="b" style="left:735px;top:282px;width:1px;height:13.5px;background:#111;"></div>
<div class="b" style="left:824px;top:279px;width:19px;height:12px;background:#f0f0f0;border:1px solid #d6d6d6;box-sizing:border-box;"></div>
<div class="b" style="left:824px;top:291px;width:19px;height:12px;background:#f0f0f0;border:1px solid #d6d6d6;box-sizing:border-box;"></div>
<svg class="b" style="left:824px;top:279px" width="19" height="24" viewBox="0 0 19 24"><path d="M7.500 7.500h4l-2-2.500z" fill="#333"/><path d="M7.500 16.500h4l-2 2.500z" fill="#333"/></svg>
<svg class="b" style="left:359px;top:343px" width="20" height="20" viewBox="0 0 20 20"><circle cx="10" cy="10" r="9.600" fill="#e4f0fa" opacity="0.8"/><circle cx="10" cy="10" r="8.800" fill="#1467b4"/><rect x="9" y="8.300" width="2.100" height="6.700" fill="#d4f2ff"/><circle cx="10" cy="5.700" r="1.300" fill="#d4f2ff"/></svg>
<div class="a" style="left:388.8px;top:344.4px;font-size:12px;line-height:14px;color:#111;letter-spacing:-0.011px;">You cannot shrink a volume beyond the point where any unmovable files are located.</div>
<div class="a" style="left:388.8px;top:359.6px;font-size:12px;line-height:14px;color:#111;letter-spacing:-0.017px;">See the &quot;defrag&quot; event in the Application log for detailed information about the</div>
<div class="a" style="left:388.8px;top:374.5px;font-size:12px;line-height:14px;color:#111;letter-spacing:-0.05px;">operation when it has completed.</div>
<div class="a" style="left:388.8px;top:423.5px;font-size:12px;line-height:14px;color:#111;letter-spacing:-0.044px;">See &quot;Shrink a basic volume&quot; in Disk Management help for more information</div>
<div class="b" style="left:652px;top:473px;width:100px;height:24px;background:#e1e1e1;border:2px solid #3c8ad4;box-sizing:border-box;"></div>
<div class="a" style="left:685.3px;top:478.3px;font-size:12px;line-height:14px;color:#111;letter-spacing:-0.236px;">Shrink</div>
<div class="b" style="left:760px;top:473px;width:84px;height:24px;background:#e1e1e1;border:1px solid #adadad;box-sizing:border-box;"></div>
<div class="a" style="left:783.1px;top:478.3px;font-size:12px;line-height:14px;color:#111;letter-spacing:0.04px;">Cancel</div>
</body></html>
